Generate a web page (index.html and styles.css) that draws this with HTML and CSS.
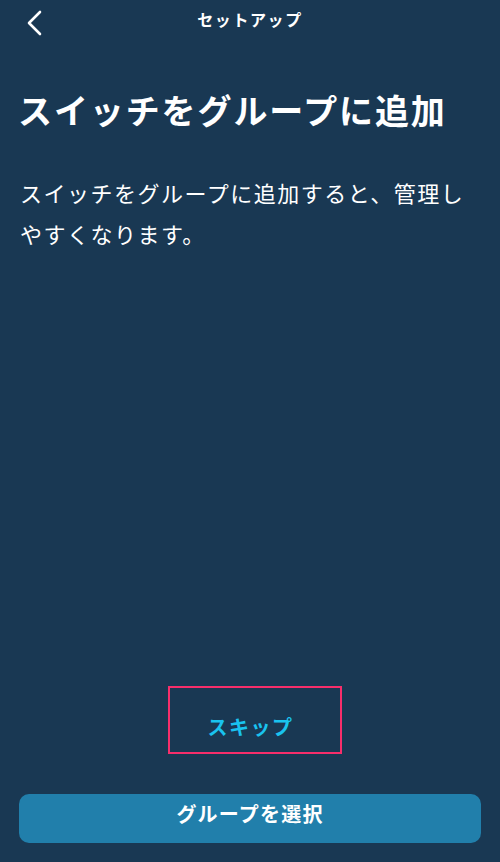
FILE: index.html
```html
<!DOCTYPE html>
<html lang="ja">
<head>
<meta charset="utf-8">
<link rel="stylesheet" href="styles.css">
</head>
<body>
<div class="screen">
  <header class="nav">
    <svg class="back" width="20" height="28" viewBox="0 0 20 28"><path d="M15 3 L4 14 L15 25" fill="none" stroke="#fff" stroke-width="2.6" stroke-linecap="round" stroke-linejoin="round"/></svg>
    <div class="nav-title">セットアップ</div>
  </header>
  <h1 class="title">スイッチをグループに追加</h1>
  <p class="desc">スイッチをグループに追加すると、管理しやすくなります。</p>
  <div class="spacer"></div>
  <div class="skip-wrap">
    <div class="skip">スキップ</div>
  </div>
  <button class="primary">グループを選択</button>
</div>
</body>
</html>
```
FILE: styles.css
```css
html, body {
  margin: 0;
  padding: 0;
  background: #193853;
}
body {
  font-family: "Noto Sans CJK JP", "Noto Sans", sans-serif;
  color: #fff;
}
.screen {
  height: 862px;
  display: flex;
  flex-direction: column;
  box-sizing: border-box;
  padding: 0 19px 19px;
}
.nav {
  position: relative;
  height: 40px;
  display: flex;
  align-items: center;
  justify-content: center;
}
.back {
  position: absolute;
  left: 6px;
  top: 9px;
}
.nav-title {
  font-size: 16px;
  font-weight: 700;
  letter-spacing: 1.6px;
  margin-top: -2px;
}
.title {
  margin: 48px 0 0 -1px;
  font-size: 34px;
  font-weight: 700;
  line-height: 44px;
  letter-spacing: 1.9px;
}
.desc {
  margin: 40px 0 0 1px;
  font-size: 22px;
  line-height: 41px;
  letter-spacing: 1.5px;
}
.spacer {
  flex: 1;
}
.skip-wrap {
  display: flex;
  justify-content: center;
  margin-bottom: 40px;
}
.skip {
  width: 162px;
  height: 52px;
  border: 2.5px solid #f72e6b;
  display: flex;
  align-items: center;
  justify-content: center;
  color: #19c3ef;
  font-size: 20px;
  font-weight: 700;
  letter-spacing: 1.5px;
  padding: 12px 8px 0 0;
  box-sizing: content-box;
  margin-left: 9px;
}
.primary {
  height: 49px;
  width: 100%;
  border: none;
  border-radius: 10px;
  background: #217fab;
  color: #fff;
  font-family: inherit;
  font-size: 20px;
  font-weight: 700;
  letter-spacing: 1.2px;
  padding: 0 0 10px;
}
```
